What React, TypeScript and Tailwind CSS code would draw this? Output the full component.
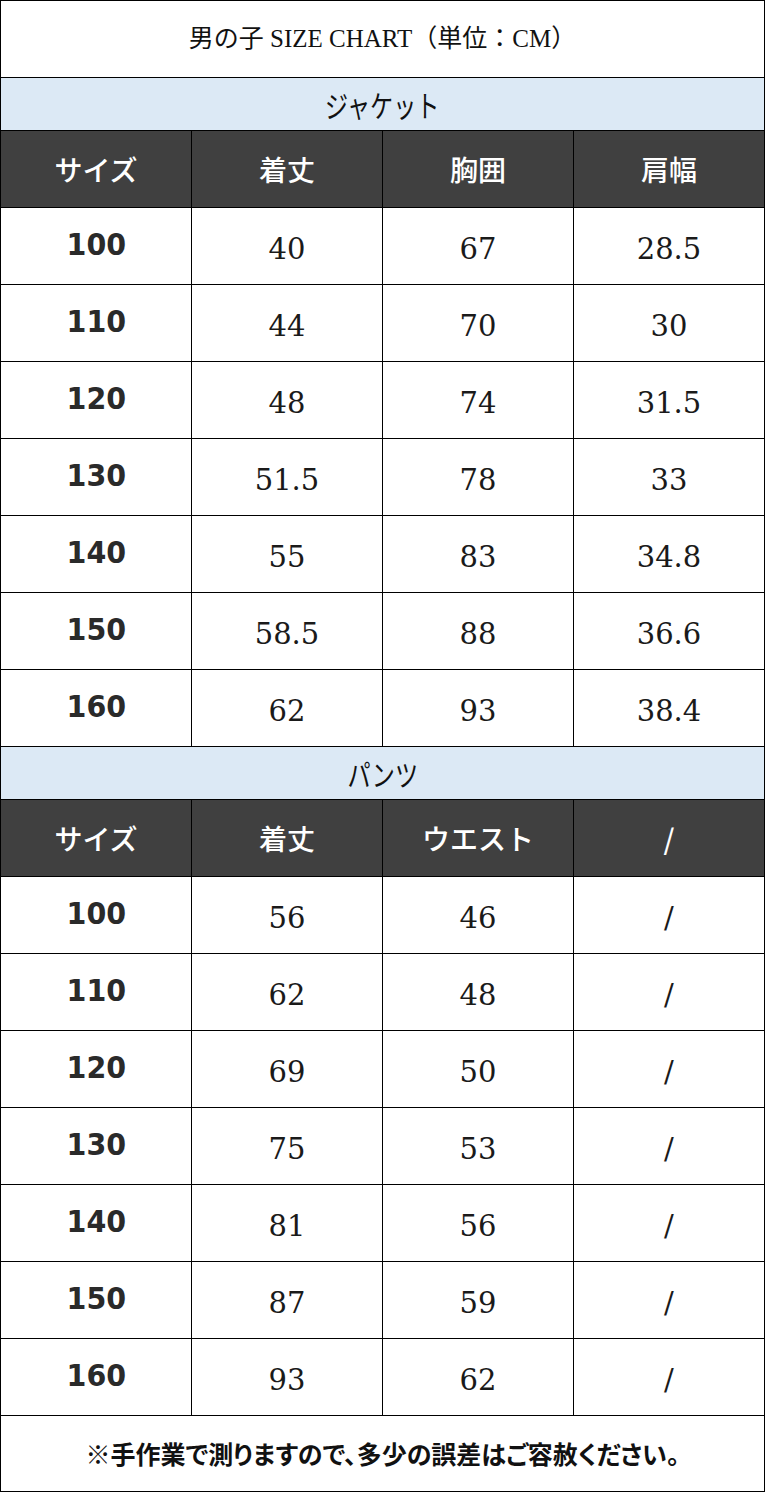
const jacket = [
  ["100", "40", "67", "28.5"],
  ["110", "44", "70", "30"],
  ["120", "48", "74", "31.5"],
  ["130", "51.5", "78", "33"],
  ["140", "55", "83", "34.8"],
  ["150", "58.5", "88", "36.6"],
  ["160", "62", "93", "38.4"],
]

const pants = [
  ["100", "56", "46", "/"],
  ["110", "62", "48", "/"],
  ["120", "69", "50", "/"],
  ["130", "75", "53", "/"],
  ["140", "81", "56", "/"],
  ["150", "87", "59", "/"],
  ["160", "93", "62", "/"],
]

function Band({ label }: { label: string }) {
  return (
    <div className="h-[53px] bg-[#dce9f5] border-b border-black flex items-center justify-center">
      <span className="inline-block scale-x-[0.77] text-[30px] text-[#111] font-['Noto_Sans_CJK_JP',sans-serif]">
        {label}
      </span>
    </div>
  )
}

function HeadRow({ cols }: { cols: string[] }) {
  return (
    <div className="grid grid-cols-[191px_191px_191px_190px] h-[77px] bg-[#404040] border-b border-black">
      {cols.map((c, i) => (
        <div key={i} className={`flex items-center justify-center ${i < 3 ? "border-r border-black" : ""}`}>
          <span className="text-[28px] font-medium text-white font-['Noto_Sans_CJK_JP',sans-serif]">{c}</span>
        </div>
      ))}
    </div>
  )
}

function DataRow({ row }: { row: string[] }) {
  return (
    <div className="grid grid-cols-[191px_191px_191px_190px] h-[77px] border-b border-black">
      <div className="flex items-center justify-center border-r border-black pb-1">
        <span className="inline-block scale-x-95 text-[30px] font-bold text-[#2a2a2a] font-['DejaVu_Sans',sans-serif]">
          {row[0]}
        </span>
      </div>
      {row.slice(1).map((v, i) => (
        <div key={i} className={`flex items-center justify-center pt-2 ${i < 2 ? "border-r border-black" : ""}`}>
          <span className="text-[29px] text-[#1a1a1a] font-['DejaVu_Serif',serif]">{v}</span>
        </div>
      ))}
    </div>
  )
}

export default function App() {
  return (
    <div className="bg-white w-[766px] min-h-[1494px]">
      <div className="w-[765px] border border-black">
        <div className="h-[77px] border-b border-black flex items-center justify-center">
          <span className="text-[25px] text-[#111] whitespace-nowrap font-['Liberation_Serif','Noto_Sans_CJK_JP',serif]">
            男の子 SIZE CHART（単位：CM）
          </span>
        </div>

        <Band label="ジャケット" />
        <HeadRow cols={["サイズ", "着丈", "胸囲", "肩幅"]} />
        {jacket.map((r) => (
          <DataRow key={"j" + r[0]} row={r} />
        ))}

        <Band label="パンツ" />
        <HeadRow cols={["サイズ", "着丈", "ウエスト", "/"]} />
        {pants.map((r) => (
          <DataRow key={"p" + r[0]} row={r} />
        ))}

        <div className="h-[75px] flex items-center justify-center">
          <span className="text-[25px] font-bold text-[#111] whitespace-nowrap [font-feature-settings:'palt'] font-['Noto_Sans_CJK_JP',sans-serif]">
            ※手作業で測りますので、多少の誤差はご容赦ください。
          </span>
        </div>
      </div>
    </div>
  )
}
